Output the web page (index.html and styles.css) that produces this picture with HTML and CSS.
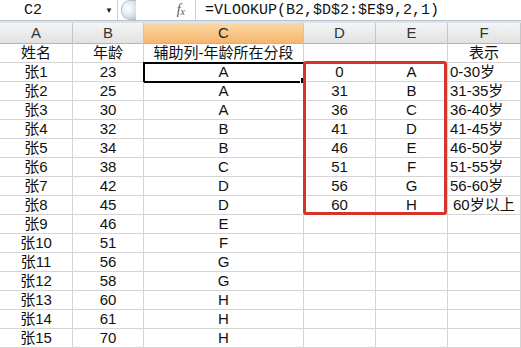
FILE: index.html
```html
<!DOCTYPE html>
<html lang="zh-CN">
<head>
    <meta charset="UTF-8">
    <title>VLOOKUP 分段</title>
    <link rel="stylesheet" href="styles.css">
</head>
<body>

<div class="formula-bar">
    <div class="name-box">
        <span class="name">C2</span>
        <span class="drop">&#9660;</span>
    </div>
    <div class="knob"></div>
    <div class="fx">f<sub>x</sub></div>
    <div class="formula">=VLOOKUP(B2,$D$2:$E$9,2,1)</div>
</div>
<div class="strip"></div>

<div class="sheet">
    <div class="col-head">A</div>
    <div class="col-head">B</div>
    <div class="col-head active">C</div>
    <div class="col-head">D</div>
    <div class="col-head">E</div>
    <div class="col-head">F</div>

    <div class="cell">姓名</div><div class="cell">年龄</div><div class="cell">辅助列-年龄所在分段</div><div class="cell"></div><div class="cell"></div><div class="cell">表示</div>
    <div class="cell">张1</div><div class="cell">23</div><div class="cell selected">A<span class="handle"></span></div><div class="cell">0</div><div class="cell">A</div><div class="cell left">0-30岁</div>
    <div class="cell">张2</div><div class="cell">25</div><div class="cell">A</div><div class="cell">31</div><div class="cell">B</div><div class="cell left">31-35岁</div>
    <div class="cell">张3</div><div class="cell">30</div><div class="cell">A</div><div class="cell">36</div><div class="cell">C</div><div class="cell left">36-40岁</div>
    <div class="cell">张4</div><div class="cell">32</div><div class="cell">B</div><div class="cell">41</div><div class="cell">D</div><div class="cell left">41-45岁</div>
    <div class="cell">张5</div><div class="cell">34</div><div class="cell">B</div><div class="cell">46</div><div class="cell">E</div><div class="cell left">46-50岁</div>
    <div class="cell">张6</div><div class="cell">38</div><div class="cell">C</div><div class="cell">51</div><div class="cell">F</div><div class="cell left">51-55岁</div>
    <div class="cell">张7</div><div class="cell">42</div><div class="cell">D</div><div class="cell">56</div><div class="cell">G</div><div class="cell left">56-60岁</div>
    <div class="cell">张8</div><div class="cell">45</div><div class="cell">D</div><div class="cell">60</div><div class="cell">H</div><div class="cell left indent">60岁以上</div>
    <div class="cell">张9</div><div class="cell">46</div><div class="cell">E</div><div class="cell"></div><div class="cell"></div><div class="cell"></div>
    <div class="cell">张10</div><div class="cell">51</div><div class="cell">F</div><div class="cell"></div><div class="cell"></div><div class="cell"></div>
    <div class="cell">张11</div><div class="cell">56</div><div class="cell">G</div><div class="cell"></div><div class="cell"></div><div class="cell"></div>
    <div class="cell">张12</div><div class="cell">58</div><div class="cell">G</div><div class="cell"></div><div class="cell"></div><div class="cell"></div>
    <div class="cell">张13</div><div class="cell">60</div><div class="cell">H</div><div class="cell"></div><div class="cell"></div><div class="cell"></div>
    <div class="cell">张14</div><div class="cell">61</div><div class="cell">H</div><div class="cell"></div><div class="cell"></div><div class="cell"></div>
    <div class="cell">张15</div><div class="cell">70</div><div class="cell">H</div><div class="cell"></div><div class="cell"></div><div class="cell"></div>

    <div class="red-box"></div>
</div>

</body>
</html>
```

FILE: styles.css
```css
body {
    margin: 0;
    background-color: #fff;
    font-family: "Liberation Sans", "Noto Sans CJK SC", sans-serif;
    overflow: hidden;
}

.formula-bar {
    display: flex;
    align-items: center;
    height: 20px;
    border-bottom: 1px solid #b9c3cf;
    background-color: #fff;
}

.name-box {
    display: flex;
    align-items: center;
    width: 118px;
    height: 100%;
    border-right: 1px solid #c9d1db;
    box-sizing: border-box;
}

.name {
    flex: 1;
    padding-left: 24px;
    font-family: "Liberation Mono", monospace;
    font-size: 15px;
    color: #111;
}

.drop {
    font-size: 8px;
    color: #222;
    margin-right: 4px;
}

.knob {
    width: 14px;
    height: 18px;
    margin-left: 3px;
    border-radius: 9px 0 0 9px;
    background: radial-gradient(circle at 40% 40%, #ffffff 0, #e4ecf4 45%, #b9c6d4 100%);
    border: 1px solid #b4c0cc;
    border-right: none;
}

.fx {
    width: 52px;
    padding-right: 10px;
    text-align: right;
    font-family: "Liberation Serif", serif;
    font-style: italic;
    font-size: 14px;
    color: #555;
    border-right: 1px solid #c9d1db;
    height: 100%;
    line-height: 20px;
    box-sizing: border-box;
    margin-left: 8px;
}

.fx sub {
    font-size: 10px;
    vertical-align: -1px;
}

.formula {
    padding-left: 9px;
    font-family: "Liberation Mono", monospace;
    font-size: 15px;
    color: #111;
    white-space: nowrap;
}

.strip {
    height: 2px;
    background-color: #dbe2ea;
}

.sheet {
    position: relative;
    display: grid;
    grid-template-columns: 73px 71px 160px 72px 72px 73px;
}

.col-head {
    height: 20px;
    line-height: 20px;
    text-align: center;
    font-size: 15px;
    color: #333;
    background: linear-gradient(#f4f4f4, #e2e2e2);
    border-right: 1px solid #c6c6c6;
    border-bottom: 1px solid #b5b5b5;
}

.col-head.active {
    background: linear-gradient(#fbd9a6, #f6b56c);
    color: #222;
}

.cell {
    position: relative;
    height: 18px;
    line-height: 18px;
    text-align: center;
    font-size: 15px;
    color: #111;
    white-space: nowrap;
    border-right: 1px solid #d4d4d4;
    border-bottom: 1px solid #d4d4d4;
}

.cell.left {
    text-align: left;
    padding-left: 2px;
}

.cell.indent {
    padding-left: 5px;
}

.cell.selected {
    outline: 2px solid #000;
    outline-offset: -1px;
}

.handle {
    position: absolute;
    right: -4px;
    bottom: -3px;
    width: 5px;
    height: 5px;
    background-color: #000;
    border: 1px solid #fff;
}

.red-box {
    position: absolute;
    left: 303px;
    top: 38px;
    width: 138px;
    height: 148px;
    border: 3px solid #d8322c;
    border-radius: 3px;
    pointer-events: none;
}
```
